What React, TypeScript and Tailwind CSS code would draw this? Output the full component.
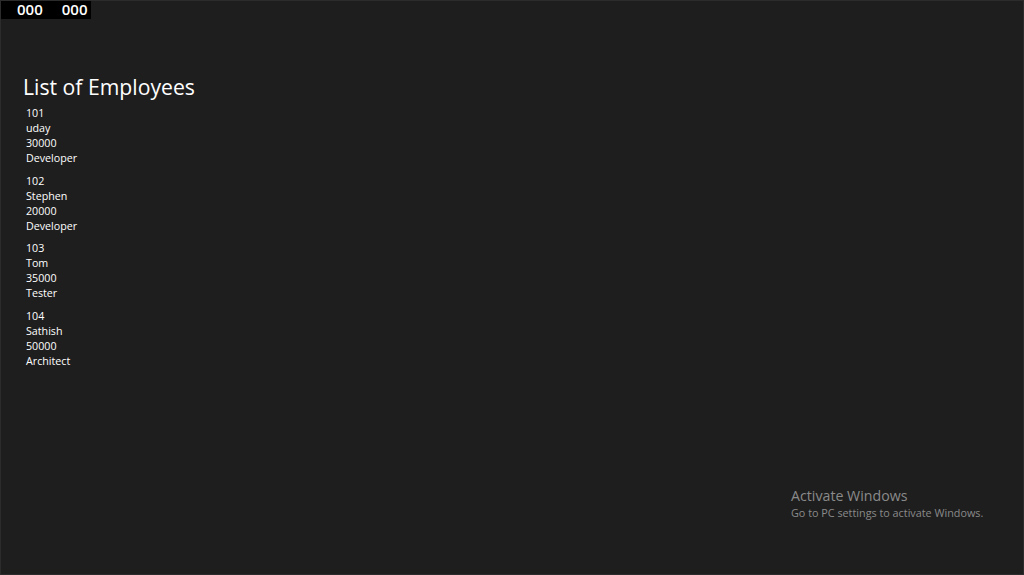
const employees = [
  { id: "101", name: "uday", salary: "30000", role: "Developer" },
  { id: "102", name: "Stephen", salary: "20000", role: "Developer" },
  { id: "103", name: "Tom", salary: "35000", role: "Tester" },
  { id: "104", name: "Sathish", salary: "50000", role: "Architect" },
];

export default function App() {
  return (
    <div
      className="relative w-[1024px] h-[575px] bg-[#1e1e1e] border border-[#2c2c2c] overflow-hidden text-white"
      style={{ fontFamily: "'Open Sans', 'Noto Sans', sans-serif" }}
    >
      {/* frame counter */}
      <div className="absolute left-0 top-0 w-[90px] h-[18px] bg-black flex items-start gap-[19px] pl-[16px] text-[15px] font-semibold leading-[17px]">
        <span>000</span>
        <span>000</span>
      </div>

      <div className="pt-[72px] pl-[22px]">
        <h1 className="text-[21.2px] leading-[28px]">List of Employees</h1>
        <div className="mt-[5px] pl-[3px] flex flex-col gap-[7.5px]">
          {employees.map((e) => (
            <div key={e.id} className="text-[10.7px] leading-[15px]">
              <p>{e.id}</p>
              <p>{e.name}</p>
              <p>{e.salary}</p>
              <p>{e.role}</p>
            </div>
          ))}
        </div>
      </div>

      <div className="absolute left-[790px] top-[485px] text-[#8a8a8a]">
        <p className="text-[14.2px] leading-[19px]">Activate Windows</p>
        <p className="text-[10.8px] leading-[15px]">Go to PC settings to activate Windows.</p>
      </div>
    </div>
  );
}
